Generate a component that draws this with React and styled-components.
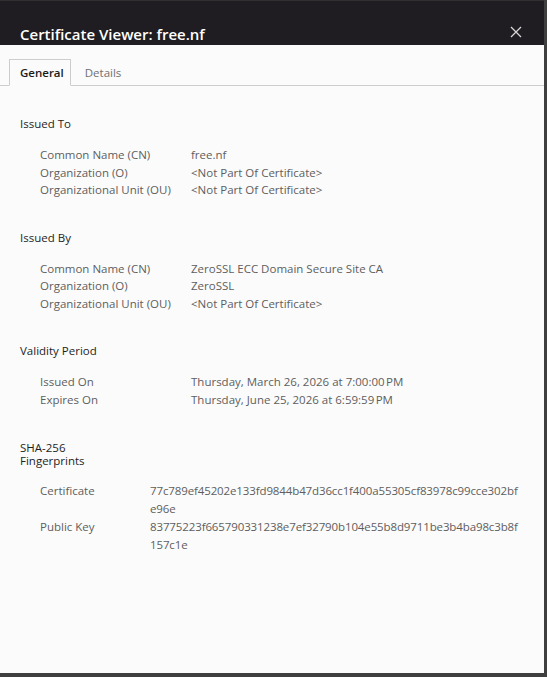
import React from 'react';
import styled, { createGlobalStyle } from 'styled-components';

const GlobalStyle = createGlobalStyle`
  html, body {
    margin: 0;
    padding: 0;
    background: #3f3f3f;
  }
  body {
    font-family: "Open Sans", "Noto Sans", sans-serif;
  }
`;

const sections = [
    {
        title: 'Issued To',
        labelWidth: 151,
        rows: [
            ['Common Name (CN)', 'free.nf'],
            ['Organization (O)', '<Not Part Of Certificate>'],
            ['Organizational Unit (OU)', '<Not Part Of Certificate>'],
        ],
    },
    {
        title: 'Issued By',
        labelWidth: 151,
        rows: [
            ['Common Name (CN)', 'ZeroSSL ECC Domain Secure Site CA'],
            ['Organization (O)', 'ZeroSSL'],
            ['Organizational Unit (OU)', '<Not Part Of Certificate>'],
        ],
    },
    {
        title: 'Validity Period',
        labelWidth: 151,
        rows: [
            ['Issued On', 'Thursday, March 26, 2026 at 7:00:00\u202FPM'],
            ['Expires On', 'Thursday, June 25, 2026 at 6:59:59\u202FPM'],
        ],
    },
    {
        title: 'SHA-256 Fingerprints',
        narrow: true,
        labelWidth: 110,
        hash: true,
        rows: [
            ['Certificate', '77c789ef45202e133fd9844b47d36cc1f400a55305cf83978c99cce302bfe96e'],
            ['Public Key', '83775223f665790331238e7ef32790b104e55b8d9711be3b4ba98c3b8f157c1e'],
        ],
    },
];

function App() {
    return (
        <>
            <GlobalStyle />
            <Dialog>
                <Header>
                    <Title>Certificate Viewer: free.nf</Title>
                    <CloseButton aria-label="Close">
                        <svg width="12" height="12" viewBox="0 0 12 12">
                            <path d="M1 1L11 11M11 1L1 11" stroke="#d6d6d6" strokeWidth="1.3" />
                        </svg>
                    </CloseButton>
                </Header>
                <TabBar>
                    <Tab $active>General</Tab>
                    <Tab>Details</Tab>
                </TabBar>
                <Content>
                    {sections.map((s, i) => (
                        <Section key={i}>
                            <Heading $narrow={s.narrow}>{s.title}</Heading>
                            <Rows $labelWidth={s.labelWidth} $hash={s.hash}>
                                {s.rows.map(([label, value], j) => (
                                    <React.Fragment key={j}>
                                        <Label>{label}</Label>
                                        <Value $hash={s.hash}>{value}</Value>
                                    </React.Fragment>
                                ))}
                            </Rows>
                        </Section>
                    ))}
                </Content>
            </Dialog>
        </>
    );
}

export default App;

const Dialog = styled.div`
  width: 544px;
  height: 673px;
  background: #fbfbfb;
  display: flex;
  flex-direction: column;
`;

const Header = styled.div`
  height: 45px;
  box-sizing: border-box;
  background: #1f1d22;
  border-top: 1px solid #303030;
  padding: 0 21px 0 20px;
  display: flex;
  align-items: flex-end;
  justify-content: space-between;
`;

const Title = styled.h1`
  margin: 0;
  color: #ffffff;
  font-size: 15px;
  font-weight: 600;
  line-height: 22px;
`;

const CloseButton = styled.button`
  border: 0;
  background: transparent;
  padding: 0;
  width: 14px;
  height: 22px;
  display: flex;
  align-items: center;
  justify-content: center;
  margin-bottom: 2px;
`;

const TabBar = styled.div`
  display: flex;
  gap: 3px;
  padding: 14px 0 0 9px;
  border-bottom: 1px solid #cdcdcd;
`;

const Tab = styled.div`
  height: 25px;
  padding: 0 ${p => (p.$active ? '6px' : '10px')} 0 10px;
  display: flex;
  align-items: center;
  font-size: 11.5px;
  margin-bottom: -1px;
  border: 1px solid ${p => (p.$active ? '#cdcdcd' : 'transparent')};
  border-bottom-color: ${p => (p.$active ? '#fbfbfb' : 'transparent')};
  color: ${p => (p.$active ? '#1a1a1a' : '#707070')};
  font-weight: ${p => (p.$active ? 600 : 400)};
`;

const Content = styled.div`
  padding: 29px 22px 0 20px;
`;

const Section = styled.section`
  & + & {
    margin-top: 30px;
  }
`;

const Heading = styled.h2`
  margin: 0;
  font-size: 11.5px;
  font-weight: 400;
  color: #1e1e1e;
  line-height: ${p => (p.$narrow ? '13px' : '18px')};
  padding-top: ${p => (p.$narrow ? '3px' : '0')};
  width: ${p => (p.$narrow ? '70px' : 'auto')};
`;

const Rows = styled.div`
  margin-top: ${p => (p.$hash ? '15px' : '13px')};
  padding-left: 20px;
  display: grid;
  grid-template-columns: ${p => p.$labelWidth}px 1fr;
  line-height: ${p => (p.$hash ? '18px' : '17.5px')};
  font-size: 11.5px;
`;

const Label = styled.div`
  color: #5e5e5e;
`;

const Value = styled.div`
  color: #5e5e5e;
  word-break: ${p => (p.$hash ? 'break-all' : 'normal')};
  letter-spacing: ${p => (p.$hash ? '-0.12px' : 'normal')};
`;
